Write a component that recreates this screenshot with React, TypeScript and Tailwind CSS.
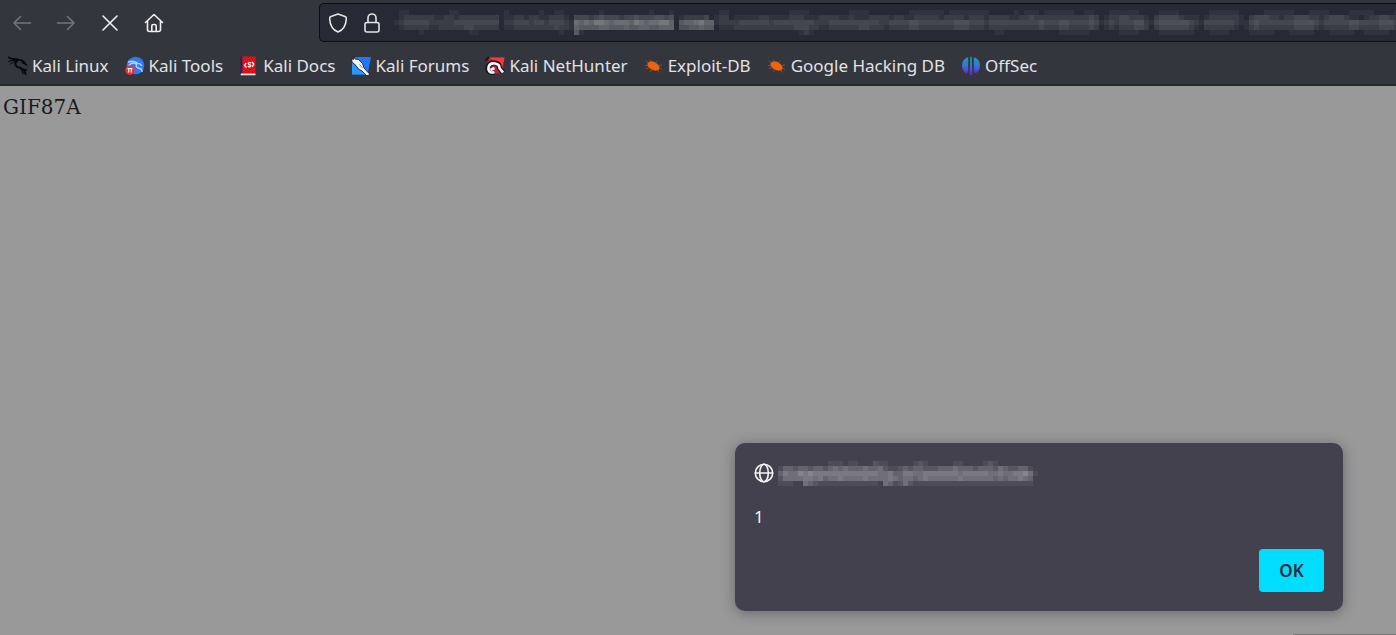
import type { ReactNode } from "react";

// Brightness per 5px cell, 0 = background, 9 = brightest.
const ADDRESS_MOSAIC = [
  "011000000001100000000010000001001100" +
    "0000010000000001000100000000" +
    "0110000000000001111000000001111000" +
    "0000011111110111111110000010111011" +
    "1111001100011111100001111000000111" +
    "111000001111110001111000011111000011",
  "012222221122122222222011221221122210" +
    "3332343332334333443401222230" +
    "1220111112211112221112222112111222" +
    "2122112222212222122212222112232222" +
    "2222222320122332221023333211101222" +
    "222102333221223332212333211012233222",
  "123333322222333333333022333233233321" +
    "7676887677768767788605667866" +
    "1222233333323333333322233333333332" +
    "2333344333333344433323333333333433" +
    "3443333431232333442134444443213333" +
    "332113433333334444323333344333344433",
  "012222211222223322222011222222223221" +
    "6555566555655665566604455655" +
    "0111222222222222333221122222233222" +
    "1222233222222233322212222222222322" +
    "2332222320121222332023333332102222" +
    "221012322222223333212222233222233322",
  "000001000000000110000000000000000100" +
    "5100000000000000000000000000" +
    "0000000000000000012100000000000000" +
    "0000000000000000000000110000000000" +
    "0111111000000111100001111111000111" +
    "100001111100011111000111110011111000",
];

const ORIGIN_MOSAIC = [
  "0000000000111011000211000001210000011000012100000000",
  "1332332332343433343342112323322233343332333243223310",
  "3544656555555555555544533554455555554555554454455641",
  "2444455453445444454444543443454444445444444343445430",
  "1110043211111111111104312421111111111111111111111110",
];

type MosaicProps = {
  rows: string[];
  fill: string;
  className?: string;
};

function Mosaic({ rows, fill, className }: MosaicProps) {
  const width = rows[0].length * 5;
  const height = rows.length * 5;
  return (
    <svg
      aria-hidden="true"
      width={width}
      height={height}
      viewBox={`0 0 ${width} ${height}`}
      fill={fill}
      shapeRendering="crispEdges"
      className={`shrink-0 ${className ?? ""}`}
    >
      {rows.map((row, y) =>
        row.split("").map((level, x) =>
          level === "0" ? null : (
            <rect key={`${x}-${y}`} x={x * 5} y={y * 5} width="5" height="5" opacity={Number(level) / 14} />
          ),
        ),
      )}
    </svg>
  );
}

function Glyph({ children }: { children: ReactNode }) {
  return (
    <svg
      aria-hidden="true"
      width="20"
      height="20"
      viewBox="0 0 20 20"
      fill="none"
      stroke="currentColor"
      strokeWidth="1.6"
      strokeLinecap="round"
      strokeLinejoin="round"
      className="shrink-0"
    >
      {children}
    </svg>
  );
}

function KaliLinuxIcon() {
  return (
    <g fill="none" stroke="#08090b" strokeLinecap="round">
      <path d="M.5 1.500 5 3l5 .5" strokeWidth="1.800" />
      <path d="M1 5.500 5 4l4 .5" strokeWidth="1.300" />
      <path d="M2 8.500 5.500 6l4-1" strokeWidth="1" />
      <path d="M9.500 4.500C6.500 6 6.500 10 10 11.200c3.500 1 6.500 1.500 7.500 6.800" strokeWidth="2" />
      <path d="M10 4c3-.5 5.500.5 7.500 4l-3-1.500" strokeWidth="1.900" />
      <path d="m12 12.500 6.500 1.500M14 14.500l1 3" strokeWidth="1.400" />
    </g>
  );
}

function KaliToolsIcon() {
  return (
    <>
      <circle cx="10.500" cy="9.500" r="8.800" fill="#2b7bf6" />
      <path
        d="M3.500 6c4-1.500 7.500-.5 9.500 1.500M4 9c3-2.500 6-2 7.500-.5-1 2.500 1 3.500 3 4s2.500 1.500 2.500 3M12 7.500c2-.5 3.500.5 4.500 2"
        fill="none"
        stroke="#b9d3ff"
        strokeWidth="1.400"
        strokeLinecap="round"
      />
      <circle cx="5" cy="14.200" r="4.800" fill="#e8323c" />
      <path d="M2.500 12.500h5M3.800 12.500v4M6.300 12.500v4" fill="none" stroke="#fff" strokeWidth="1.100" />
    </>
  );
}

function KaliDocsIcon() {
  return (
    <>
      <path d="M2.500.5h14v16.500h-14z" fill="#dd1219" />
      <path d="M1.500.5h1.800v16l-1.800 2z" fill="#15265f" />
      <path d="M2 17.500h14.500v1.800H1.500z" fill="#ece6e6" />
      <path
        d="M7.200 7 5.500 9.500 7.500 11.500M13 6l1.800 2-1.500 2.800M12 7.200c-1-1.200-3-.6-2.700.7s2.600.5 2.500 1.900-2 1.400-3 .3"
        fill="none"
        stroke="#fff"
        strokeWidth="1.300"
      />
    </>
  );
}

function KaliForumsIcon() {
  return (
    <>
      <path d="M3 1h17l-3.500 17.500H1V4z" fill="#2178f4" />
      <path d="M1 7v11.500h15z" fill="#2997ff" />
      <path
        d="m3 .5 1 2.500 3.500.5 4 4 1.500 4.500 5 5.500.5 2h-3l-4.500-4.500-3.500-2L5 9.500 1 6 .5 3l2 .5z"
        fill="#f3f4f6"
        stroke="#15171c"
        strokeWidth=".8"
      />
      <path d="m8.500 8.500 3 3.500" stroke="#80838c" strokeWidth="1" />
    </>
  );
}

function KaliNetHunterIcon() {
  return (
    <>
      <path d="M4 1.500h15.500L17.500 17.500H2L1 12z" fill="#bd1c3a" />
      <path d="M4 1.500h15.500l-2 9z" fill="#f8383e" />
      <path d="M.5 4.500 4 1" stroke="#111" strokeWidth="1.600" />
      <path
        d="M9.500 16c-4 1.500-7-.5-6.500-4.500.5-3 3.500-5 7-4.500s4.500 3 4.500 5l3.500 4.500"
        fill="none"
        stroke="#101216"
        strokeWidth="5"
      />
      <path
        d="M9.500 16c-4 1.500-6.500-.5-6-4.500.5-3 3-4.500 6.500-4s4.500 3 4.500 4.500l3.500 4.500M9.500 12l-4 2"
        fill="none"
        stroke="#f6f6f6"
        strokeWidth="2.700"
      />
    </>
  );
}

function BugIcon() {
  return (
    <>
      <ellipse cx="9.500" cy="10" rx="6.500" ry="4" transform="rotate(27 9.500 10)" fill="#ee6310" />
      <path
        d="M4 7 2 4.500M7 6 6 3.500M11 7l2.500-2M14 9.500l4-.5M15 12l3 1.500M14 14l1 2.500M9 13.500l-3 2M6 11.500l-4 1M4 9.500H1"
        fill="none"
        stroke="#a8521f"
        strokeWidth=".8"
      />
    </>
  );
}

function OffSecIcon() {
  return (
    <>
      <defs>
        <linearGradient id="offsec" x1="0" y1="1" x2="0" y2="19" gradientUnits="userSpaceOnUse">
          <stop stopColor="#10a3b5" />
          <stop offset=".5" stopColor="#3a70d8" />
          <stop offset="1" stopColor="#6a22c8" />
        </linearGradient>
      </defs>
      <g fill="url(#offsec)">
        <path d="M7.200 1.200v13L5.800 17.500C2.500 15.800 1 13 1 9.800c0-4.300 2.200-7.600 6.200-8.600z" />
        <path d="M12.800 1.200v13l1.400 3.300c3.300-1.700 4.800-4.500 4.800-7.700 0-4.300-2.200-7.600-6.200-8.600z" />
        <path d="M9.300.8h1.400l.7 18.200H8.600z" />
      </g>
    </>
  );
}

const bookmarks = [
  { label: "Kali Linux", icon: <KaliLinuxIcon /> },
  { label: "Kali Tools", icon: <KaliToolsIcon /> },
  { label: "Kali Docs", icon: <KaliDocsIcon /> },
  { label: "Kali Forums", icon: <KaliForumsIcon /> },
  { label: "Kali NetHunter", icon: <KaliNetHunterIcon /> },
  { label: "Exploit-DB", icon: <BugIcon /> },
  { label: "Google Hacking DB", icon: <BugIcon /> },
  { label: "OffSec", icon: <OffSecIcon /> },
];

function NavBar() {
  return (
    <div className="flex h-[45px] items-center">
      <div className="flex shrink-0 items-center gap-6 pl-3 text-[#f0f0f3]">
        <button type="button" aria-label="Back" disabled className="text-[#73757b]">
          <Glyph>
            <path d="M18.500 10H2M8.500 3.500 2 10l6.500 6.500" />
          </Glyph>
        </button>
        <button type="button" aria-label="Forward" disabled className="text-[#73757b]">
          <Glyph>
            <path d="M1.500 10H18M11.500 3.500 18 10l-6.500 6.500" />
          </Glyph>
        </button>
        <button type="button" aria-label="Stop">
          <Glyph>
            <path d="m3 3 14 14M17 3 3 17" />
          </Glyph>
        </button>
        <button type="button" aria-label="Home">
          <Glyph>
            <path d="M1.500 9.500 10 1.500l8.500 8M3.500 8v8.500a2 2 0 0 0 2 2h9a2 2 0 0 0 2-2V8M7.800 18.500v-5.500a1.500 1.500 0 0 1 1.500-1.500h1.400a1.500 1.500 0 0 1 1.500 1.500v5.500" />
          </Glyph>
        </button>
      </div>
      <div className="ml-[155px] flex h-[39px] min-w-0 flex-1 items-center overflow-hidden rounded-l-[5px] border-y border-l border-[#0e0f14] bg-[#272935] pl-2 text-[#e4e4e7]">
        <button type="button" aria-label="Tracking protection">
          <Glyph>
            <path d="M10 1 17 3.500q1.500.5 1.300 2.200C18 12 15 17 10 19 5 17 2 12 1.700 5.700 1.500 4 3 3.500 3 3.500z" />
          </Glyph>
        </button>
        <button type="button" aria-label="Site information" className="ml-3.5">
          <Glyph>
            <rect x="3" y="9.500" width="14" height="9.500" rx="2" />
            <path d="M6 9.500V5a4 4 0 0 1 8 0v4.500" />
          </Glyph>
        </button>
        <Mosaic rows={ADDRESS_MOSAIC} fill="#b0b2b4" className="ml-3" />
      </div>
    </div>
  );
}

function BookmarksBar() {
  return (
    <nav
      aria-label="Bookmarks"
      className="flex h-[41px] items-start gap-4 overflow-hidden border-b-2 border-[#29292d] pl-2 pt-2"
    >
      {bookmarks.map((bookmark) => (
        <a
          key={bookmark.label}
          href="#"
          className="flex shrink-0 items-center gap-1 whitespace-nowrap text-[17px] leading-[26px] text-[#e2e2e4]"
        >
          <svg aria-hidden="true" width="20" height="20" viewBox="0 0 20 20" className="shrink-0">
            {bookmark.icon}
          </svg>
          {bookmark.label}
        </a>
      ))}
    </nav>
  );
}

function AlertDialog() {
  return (
    <div
      role="alertdialog"
      aria-modal="true"
      aria-describedby="alert-message"
      className="absolute bottom-6 right-[53px] w-[608px] max-w-full rounded-[10px] bg-[#44414e] px-[19px] pb-[19px] pt-[18px] text-[#f4f4f6] shadow-[0_2px_14px_rgba(30,30,40,0.4)]"
    >
      <div className="flex h-6 items-center">
        <Glyph>
          <circle cx="10" cy="10" r="8.700" />
          <ellipse cx="10" cy="10" rx="4.300" ry="8.700" />
          <path d="M1.500 10h17" />
        </Glyph>
        <Mosaic rows={ORIGIN_MOSAIC} fill="#dedee4" className="ml-1" />
      </div>
      <p id="alert-message" className="mt-5 text-[17px] leading-6">
        1
      </p>
      <div className="mt-5 flex justify-end">
        <button
          type="button"
          className="h-[43px] w-[65px] rounded bg-[#00ddff] text-[17px] font-semibold text-[#2b2a33]"
        >
          OK
        </button>
      </div>
    </div>
  );
}

export default function App() {
  return (
    <div className="relative flex min-h-screen flex-col overflow-hidden bg-[#99999a] font-['Noto_Sans',sans-serif]">
      <header className="bg-[#34363e]">
        <NavBar />
        <BookmarksBar />
      </header>
      <main className="flex-1 px-[3px] pt-2 font-['DejaVu_Serif',serif] text-[20px] leading-[26px] text-[#19191c]">
        GIF87A
      </main>
      <AlertDialog />
      <div className="absolute bottom-0 right-0 h-px w-[103px] bg-[#777679]" />
    </div>
  );
}
